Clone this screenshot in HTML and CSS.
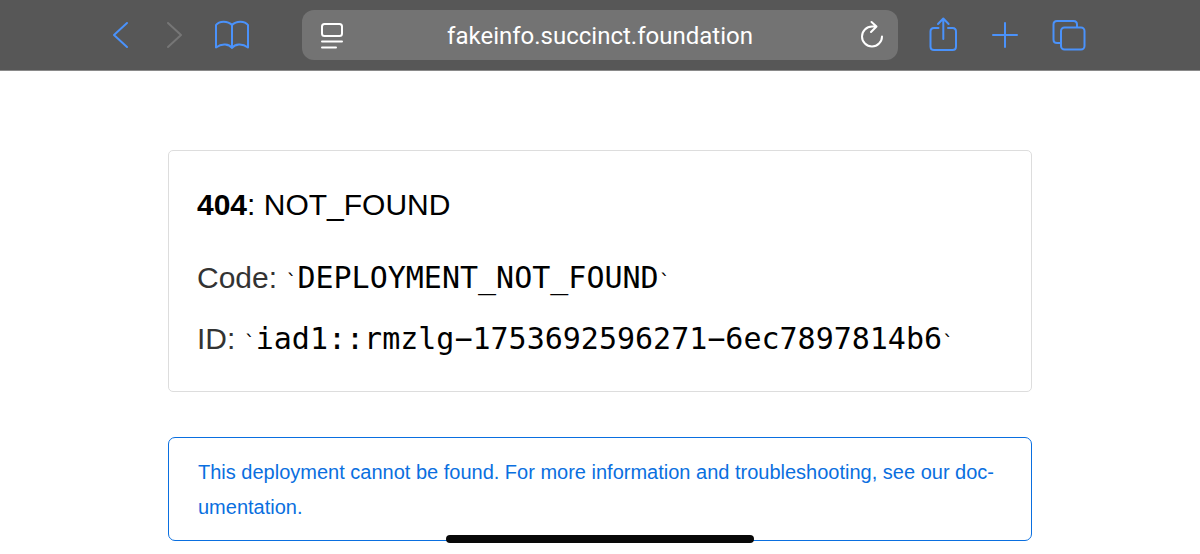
FILE: index.html
```html
<!DOCTYPE html>
<html lang="en">
<head>
<meta charset="utf-8">
<meta name="viewport" content="width=device-width, initial-scale=1">
<title>404: NOT_FOUND</title>
<link rel="stylesheet" href="styles.css">
</head>
<body>
<header class="toolbar">
  <nav class="group" aria-label="History">
    <button class="tool" type="button" aria-label="Back">
      <svg width="26" height="40" viewBox="0 0 26 40"><path d="M20 8 7 20l13 12"/></svg>
    </button>
    <button class="tool" type="button" aria-label="Forward" disabled>
      <svg width="26" height="40" viewBox="0 0 26 40"><path d="M7 8 20 20 7 32"/></svg>
    </button>
    <button class="tool" type="button" aria-label="Bookmarks">
      <svg width="34" height="40" viewBox="0 0 34 40"><path d="M17 10v23C14 29 7 28 1 32.500V10C4 5.500 13 5.500 17 10C21 5.500 30 5.500 33 10V32.500C27 28 20 29 17 33"/></svg>
    </button>
  </nav>
  <div class="address">
    <button class="tool light" type="button" aria-label="Page menu">
      <svg width="24" height="40" viewBox="0 0 24 40"><rect x="2" y="9" width="20" height="12" rx="2.500"/><path d="M2 26.500h20M2 32.500h14"/></svg>
    </button>
    <input class="url" type="text" aria-label="Address" value="fakeinfo.succinct.foundation">
    <button class="tool light" type="button" aria-label="Reload">
      <svg width="24" height="40" viewBox="0 0 24 40"><path d="M16 11.500H12A10 10 0 1 0 22 21.500M11.500 7l5 4.500-5.500 5.500"/></svg>
    </button>
  </div>
  <nav class="group right" aria-label="Page actions">
    <button class="tool" type="button" aria-label="Share">
      <svg width="32" height="40" viewBox="0 0 32 40"><path d="M11.500 13H7q-3.500 0-3.500 3.500v15Q3.500 35 7 35h18.500q3.500 0 3.500-3.500v-15q0-3.500-3.500-3.500H21M16.300 24V4M11 9l5.300-5.500L21.600 9"/></svg>
    </button>
    <button class="tool" type="button" aria-label="New tab">
      <svg width="32" height="40" viewBox="0 0 32 40"><path d="M16 8v24M4 20h24"/></svg>
    </button>
    <button class="tool" type="button" aria-label="Show tabs">
      <svg width="36" height="40" viewBox="0 0 36 40"><path d="M10 28H6q-3.500 0-3.500-3.500v-15Q2.500 6 6 6h16.500Q26 6 26 9.500V12"/><rect x="10" y="12.500" width="23.500" height="22" rx="3.500"/></svg>
    </button>
  </nav>
</header>
<main class="page">
  <section class="card">
    <h1 class="title"><strong>404</strong>: NOT_FOUND</h1>
    <p class="detail">Code: <span class="tick">`</span><code class="code">DEPLOYMENT_NOT_FOUND</code><span class="tick">`</span></p>
    <p class="detail">ID: <span class="tick">`</span><code class="code">iad1::rmzlg−1753692596271−6ec7897814b6</code><span class="tick">`</span></p>
  </section>
  <a class="note" href="#">This deployment cannot be found. For more information and troubleshooting, see our doc&shy;umentation.</a>
</main>
<div class="home-indicator"></div>
</body>
</html>
```
FILE: styles.css
```css
* {
  box-sizing: border-box;
}

body {
  margin: 0;
  background: #fff;
  color: #000;
  font-family: "Liberation Sans", Arial, sans-serif;
}

.toolbar {
  display: flex;
  align-items: center;
  padding: 10px 113px 10px 107px;
  background: #575757;
  border-bottom: 1px solid #8a8a8a;
}

.group {
  display: flex;
  gap: 28px;
  margin-right: 53px;
}

.group.right {
  gap: 30px;
  margin: 0 0 0 29px;
}

.tool {
  display: block;
  padding: 0;
  border: 0;
  background: none;
  color: #4a92fb;
}

.tool:disabled {
  color: #767676;
}

.tool.light {
  color: #fff;
}

.tool svg {
  display: block;
  fill: none;
  stroke: currentColor;
  stroke-width: 2;
  stroke-linecap: round;
  stroke-linejoin: round;
}

.address {
  display: flex;
  flex: 1;
  align-items: center;
  min-width: 0;
  height: 50px;
  padding: 0 14px 0 18px;
  border-radius: 12px;
  background: #737373;
}

.url {
  flex: 1;
  min-width: 0;
  padding: 2px 4px 0 0;
  border: 0;
  outline: 0;
  background: none;
  color: #fff;
  font-family: Roboto, sans-serif;
  font-size: 24px;
  line-height: 30px;
  text-align: center;
}

.page {
  display: flex;
  flex-direction: column;
  gap: 45px;
  width: 72%;
  margin: 0 auto;
  padding: 79px 0 14px;
}

.card {
  padding: 24px 28px 22px;
  border: 1px solid #ddd;
  border-radius: 5px;
}

.title,
.detail {
  margin: 0;
  font-size: 30px;
  font-weight: 400;
  line-height: 60px;
}

.title {
  margin-bottom: 12px;
}

.detail {
  color: #333;
  line-height: 61px;
}

.tick {
  color: #000;
  font-family: "DejaVu Sans Mono", monospace;
  font-size: 20px;
  line-height: 30px;
}

.code {
  color: #000;
  font-family: "DejaVu Sans Mono", monospace;
  font-size: 30px;
  line-height: 30px;
}

.note {
  display: block;
  padding: 17px 29px 15px;
  border: 1px solid #0a6fe0;
  border-radius: 7px;
  color: #0a6fe0;
  font-size: 20px;
  line-height: 35px;
  text-decoration: none;
}

.home-indicator {
  position: fixed;
  bottom: 11px;
  left: 50%;
  width: 308px;
  height: 8px;
  margin-left: -154px;
  border-radius: 4px;
  background: #080808;
}
```
